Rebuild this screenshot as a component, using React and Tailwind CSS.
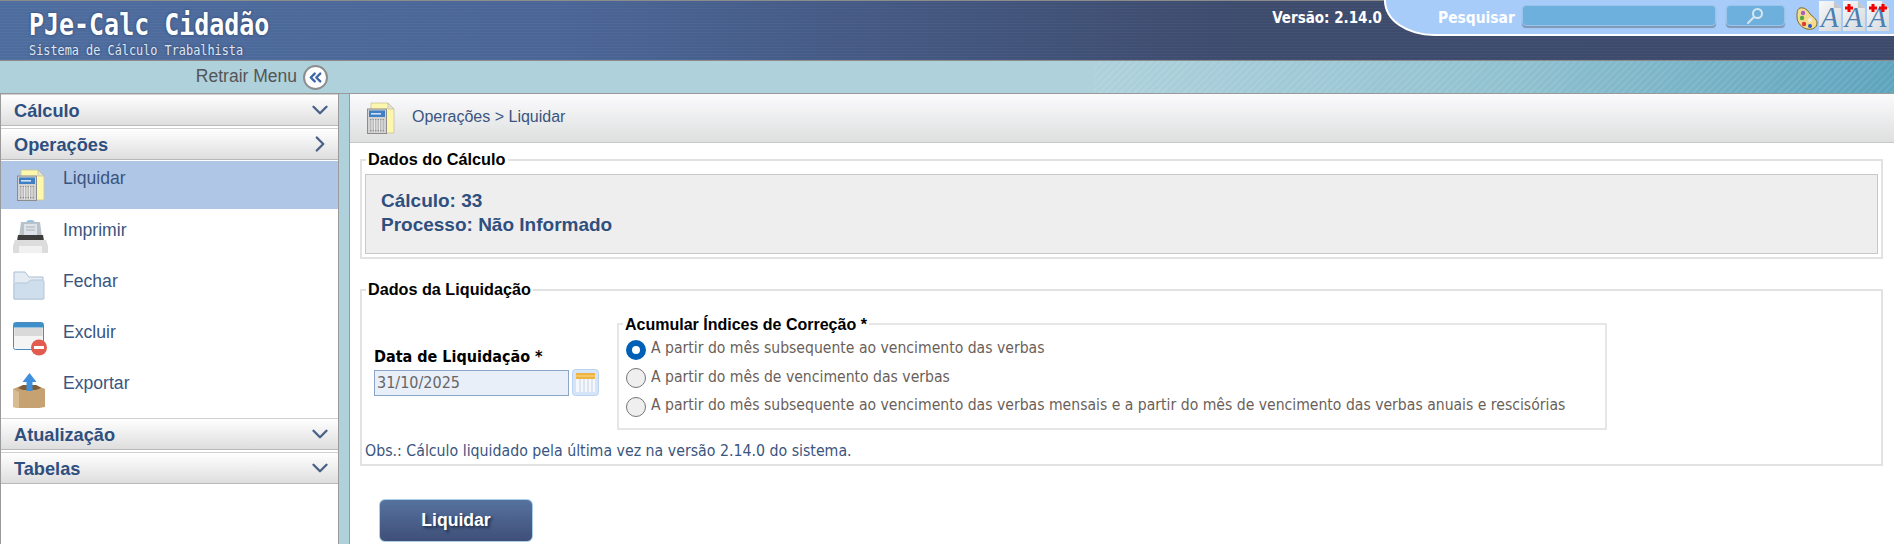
import { ChevronDown, ChevronRight, ChevronsLeft } from "lucide-react";

const CalcIcon = ({ className }) => (
    <svg className={className} viewBox="0 0 28 32">
        <path d="M4 1h17l6 6v24H4z" fill="#fdf7ae" stroke="#c9c49a" strokeWidth="0.8" />
        <path d="M21 1l6 6h-6z" fill="#e9e6d0" stroke="#b5b19a" strokeWidth="0.6" />
        <rect x="0.500" y="7" width="19" height="24.500" fill="#d2d2d2" stroke="#8c8c8c" />
        <rect x="2" y="8.500" width="16" height="6.500" fill="#3f7fc4" />
        <rect x="4" y="11" width="10" height="1.600" fill="#cfe3f7" />
        <rect x="3" y="17" width="14" height="12.500" fill="#8f8f8f" />
        <path d="M3 19h14M3 21h14M3 23h14M3 25h14M3 27h14M5 17v13M7.500 17v13M10 17v13M12.500 17v13M15 17v13" stroke="#eee" strokeWidth="0.900" />
    </svg>
);

const PrinterIcon = () => (
    <svg className="w-[35px] h-[33px]" viewBox="0 0 35 33">
        <ellipse cx="17.500" cy="2" rx="4" ry="2" fill="#8ec2e6" />
        <path d="M8 2h19l2 15H6z" fill="#b9c2c9" />
        <rect x="11" y="4" width="13" height="11" fill="#dde3e8" />
        <path d="M13 7h9M13 10h9" stroke="#a9b2ba" />
        <path d="M5 15h25l1 6H4z" fill="#3d3d3d" />
        <path d="M2 20h31l2 6v7H0v-7z" fill="#dcdcdc" />
        <rect x="6" y="26" width="23" height="7" fill="#f1f1f1" />
    </svg>
);

const FolderIcon = () => (
    <svg className="w-[32px] h-[29px]" viewBox="0 0 32 29">
        <path d="M1 28V1h11l4 5h14v22z" fill="#e4ebf3" stroke="#a9bdd2" />
        <path d="M1 28V14c0-1 1-2 2-2h11l4-3h11c1 0 2 1 2 2v17z" fill="#cfdeec" stroke="#b4c6d8" />
    </svg>
);

const RemoveIcon = () => (
    <svg className="w-[35px] h-[34px]" viewBox="0 0 35 34">
        <rect x="0.500" y="0.500" width="30" height="27" rx="2" fill="#f4f4f4" stroke="#4b8cc0" />
        <rect x="1" y="1" width="29" height="4.500" fill="#3f8fc9" />
        <rect x="1.500" y="6" width="28" height="8" fill="#d9d9d9" />
        <circle cx="26" cy="25.500" r="8" fill="#e25b4e" />
        <rect x="21" y="24" width="10" height="3" fill="#fff" />
    </svg>
);

const ExportIcon = () => (
    <svg className="w-[33px] h-[35px]" viewBox="0 0 33 35">
        <path d="M0 16l10-4h13l9 4v18l-6 1H6l-6-1z" fill="#c6a273" />
        <path d="M5 15l5-3h13l5 3-5 2H10z" fill="#7d5d37" />
        <path d="M16.500 0l7 9h-4v9h-6V9h-4z" fill="#3f8fdc" />
        <path d="M0 16l6 3v16l-6-1z" fill="#d8bb91" />
    </svg>
);

const CalendarIcon = () => (
    <svg className="w-[27px] h-[27px]" viewBox="0 0 27 27">
        <rect x="0.500" y="0.500" width="26" height="26" rx="3" fill="#d5e4f7" stroke="#bcd3ef" />
        <rect x="4" y="4" width="19" height="6" fill="#eeb33f" />
        <rect x="4" y="6.500" width="19" height="1" fill="#f8d990" />
        <rect x="4" y="10" width="19" height="13" fill="#f4f7fb" />
        <path d="M8 10v13M12 10v13M16 10v13M20 10v13" stroke="#c4d3e6" />
    </svg>
);

const SearchIcon = () => (
    <svg className="w-[18px] h-[18px]" viewBox="0 0 18 18" fill="none" stroke="#d8e6f2" strokeWidth="2">
        <circle cx="11.500" cy="6.500" r="4.500" />
        <path d="M8 10l-6 6" strokeLinecap="round" />
    </svg>
);

const PaletteIcon = () => (
    <svg className="w-[22px] h-[23px]" viewBox="0 0 22 23">
        <path d="M4 1c4-1 8 2 10 6 2 2 7 5 7 9 0 5-5 7-10 6C6 21 1 16 1 10 1 6 1 2 4 1z" fill="#f3dc8e" stroke="#7b6a2a" />
        <circle cx="7" cy="6" r="2.200" fill="#a65fc9" />
        <circle cx="6" cy="11" r="2.200" fill="#4faa3c" />
        <circle cx="8" cy="17" r="2.200" fill="#e03b2e" />
        <circle cx="14" cy="13" r="2" fill="#eee" />
        <circle cx="14" cy="19" r="2" fill="#2a55c8" />
    </svg>
);

// page icon with the A, plus = how many red crosses sit on top
const FontDocIcon = ({ plus = 0 }) => (
    <div className="relative w-[22px] h-[30px] bg-[linear-gradient(135deg,#f8f8f8,#d5d8dc)] flex items-center justify-center shrink-0">
        <svg className="absolute top-0 right-0 w-[7px] h-[7px]" viewBox="0 0 7 7">
            <path d="M0 0h7v7z" fill="#a8ccfa" />
            <path d="M0 0v7h7z" fill="#c4c6ca" />
        </svg>
        <span className="font-['Liberation_Serif',serif] italic text-[#4a7fb5] text-[29px] leading-none pt-[3px]">A</span>
        {plus > 0 && (
            <svg className="absolute top-[3px] left-[2px] w-[20px] h-[8px]" viewBox="0 0 20 8" fill="#f00000">
                <path d="M2.500 0h3v2.500H8v3H5.500V8h-3V5.500H0v-3h2.500z" />
                {plus > 1 && <path d="M12.500 0h3v2.500H18v3h-2.500V8h-3V5.500H10v-3h2.500z" />}
            </svg>
        )}
    </div>
);

const SectionHeader = ({ title, open, gap = "mb-[2px]" }) => (
    <div className={`h-[32px] ${gap} flex items-center justify-between pl-[13px] pr-[5px] border-y border-[#b9b9b9] border-t-[#d0d0d0] bg-[linear-gradient(#ffffff,#dedede)]`}>
        <span className="text-[18.200px] font-bold text-[#2f4f7f] pt-[4px]">{title}</span>
        {open
            ? <ChevronRight size={26} strokeWidth={2.200} className="text-[#4a6288]" />
            : <ChevronDown size={26} strokeWidth={2.200} className="text-[#4a6288]" />}
    </div>
);

const MenuItem = ({ label, icon, active }) => (
    <div className={active ? "h-[48px] flex bg-[#b0c6e6] pt-[5px]" : "h-[51px] flex pt-[9px]"}>
        <div className={`w-[62px] pl-[12px] shrink-0 ${active ? "pt-[3px]" : "pt-[2px]"}`}>{icon}</div>
        <span className="text-[17.600px] text-[#3a5580] leading-[24px]">{label}</span>
    </div>
);

const Radio = ({ checked, label }) => (
    <div className="flex items-center h-[28.300px]">
        {checked ? (
            <span className="w-[20px] h-[20px] rounded-full border-[6px] border-[#0060b8] bg-white shrink-0" />
        ) : (
            <span className="w-[20px] h-[20px] rounded-full border border-[#767676] bg-[#efefef] shrink-0" />
        )}
        <span className="ml-[5px] -mt-[2px] text-[#6b5f5a] whitespace-nowrap">{label}</span>
    </div>
);

export default function App() {
    return (
        <div className="w-[1894px] h-[544px] overflow-hidden bg-white font-['Liberation_Sans',Arial,sans-serif]">
            {/* Header */}
            <div className="h-[61px] flex border-t border-b border-[#8c8c8c] bg-[repeating-linear-gradient(0deg,rgba(255,255,255,0.03)_0_1px,transparent_1px_3px),linear-gradient(90deg,#4e6d9f_0%,#4a6596_30%,#3d4b6d_65%,#3d4a6b_100%)]">
                <div className="pl-[29px] pt-[5px] text-white [text-shadow:0_0_3px_#2a3f66]">
                    <div className="font-['DejaVu_Sans_Mono',monospace] font-bold text-[31px] leading-[36px] origin-left scale-x-[0.805] whitespace-nowrap">PJe-Calc Cidadão</div>
                    <div className="font-['DejaVu_Sans_Mono',monospace] text-[13.700px] leading-[16px] origin-left scale-x-[0.866] text-[#dfe7f2] whitespace-nowrap">Sistema de Cálculo Trabalhista</div>
                </div>
                <div className="flex-1" />
                <div className="pt-[8px] pr-[2px] font-['DejaVu_Sans_Condensed','DejaVu_Sans',sans-serif] font-bold text-[15px] leading-[18px] text-white whitespace-nowrap">Versão: 2.14.0</div>
                <div className="w-[510px] h-[36px] -mt-px rounded-bl-[50px_35px] border-b-2 border-l-2 border-white bg-[#a8ccfa] flex items-start pl-[52px] pt-[5px]">
                    <span className="font-['DejaVu_Sans_Condensed','DejaVu_Sans',sans-serif] font-bold text-[15.400px] leading-[26px] text-white">Pesquisar</span>
                    <div className="ml-[7px] w-[194px] h-[21px] rounded-[4px] bg-[#6db0dd] border border-[#9cc5ea] shadow-[0_2px_1px_#7f96b5]" />
                    <div className="ml-[10px] w-[59px] h-[21px] rounded-[4px] bg-[#6db0dd] border border-[#9cc5ea] shadow-[0_2px_1px_#7f96b5] flex items-center justify-center">
                        <SearchIcon />
                    </div>
                    <div className="ml-[11px] flex items-start">
                        <div className="pt-[2px]"><PaletteIcon /></div>
                        <div className="ml-[1px] -mt-[4px] flex gap-[2px]">
                            <FontDocIcon />
                            <FontDocIcon plus={1} />
                            <FontDocIcon plus={2} />
                        </div>
                    </div>
                </div>
            </div>

            {/* Retrair Menu strip */}
            <div className="h-[33px] flex items-center bg-[#aed1dc] border-b border-[#9a9a9a]">
                <div className="w-[303px] text-right pr-[6px] text-[17.500px] text-[#555] -mt-[2px]">Retrair Menu</div>
                <div className="w-[25px] h-[25px] rounded-full bg-white border-2 border-[#8d8d8d] flex items-center justify-center text-[#3f66a8]">
                    <ChevronsLeft size={19} strokeWidth={3} />
                </div>
                <div className="ml-auto w-[800px] h-full bg-[repeating-linear-gradient(135deg,rgba(255,255,255,0.08)_0_2px,transparent_2px_5px),linear-gradient(90deg,#aed1dc_0%,#92c2d0_50%,#5ea4bd_100%)]" />
            </div>

            {/* Body */}
            <div className="flex h-[450px] bg-[#aed1dc]">
                {/* Sidebar */}
                <div className="w-[339px] shrink-0 bg-white border-x border-[#9a9a9a]">
                    <SectionHeader title="Cálculo" />
                    <SectionHeader title="Operações" open gap="mb-[1px]" />
                    <MenuItem label="Liquidar" active icon={<CalcIcon className="w-[28px] h-[32px] ml-[4px]" />} />
                    <MenuItem label="Imprimir" icon={<PrinterIcon />} />
                    <MenuItem label="Fechar" icon={<FolderIcon />} />
                    <MenuItem label="Excluir" icon={<RemoveIcon />} />
                    <MenuItem label="Exportar" icon={<ExportIcon />} />
                    <div className="h-[5px]" />
                    <SectionHeader title="Atualização" />
                    <SectionHeader title="Tabelas" />
                </div>

                {/* Main */}
                <div className="ml-[10px] flex-1 bg-white border-l border-[#9a9a9a]">
                    <div className="h-[49px] flex items-center bg-[linear-gradient(#fbfbfd,#dedfdf)] border-b border-[#c8c8c8]">
                        <CalcIcon className="w-[28px] h-[32px] ml-[17px]" />
                        <span className="ml-[17px] -mt-[2px] text-[16px] text-[#3a5580]">Operações &gt; Liquidar</span>
                    </div>

                    <div className="relative mt-[16px] ml-[10px] mr-[11px] h-[100px] border-2 border-[#e2e2e2] px-[3px] pt-[13px]">
                        <span className="absolute -top-[11px] left-[4px] bg-white px-[2px] text-[16.300px] leading-[18px] font-bold text-black">Dados do Cálculo</span>
                        <div className="h-[80px] bg-[#eeeeee] border border-[#c8c8c8] pl-[15px] pt-[14px] text-[19px] leading-[24px] font-bold text-[#2f4f7f]">
                            <div>Cálculo: 33</div>
                            <div>Processo: Não Informado</div>
                        </div>
                    </div>

                    <div className="relative mt-[30px] ml-[10px] mr-[11px] h-[177px] border-2 border-[#e2e2e2]">
                        <span className="absolute -top-[11px] left-[4px] bg-white px-[2px] text-[16.200px] leading-[18px] font-bold text-black">Dados da Liquidação</span>
                        <div className="flex pt-[32px]">
                            <div className="w-[255px] pl-[12px] pt-[24px] shrink-0">
                                <div className="font-['DejaVu_Sans_Condensed','DejaVu_Sans',sans-serif] font-bold text-[16px] leading-[20px] text-black">Data de Liquidação *</div>
                                <div className="flex mt-[3px]">
                                    <div className="w-[195px] h-[26px] bg-[#e8eff8] border border-[#8aa5c8] pl-[2px] text-[16px] leading-[24px] text-[#666] font-['DejaVu_Sans_Condensed','DejaVu_Sans',sans-serif]">31/10/2025</div>
                                    <div className="ml-[3px] -mt-[1px]"><CalendarIcon /></div>
                                </div>
                            </div>
                            <div className="relative w-[990px] h-[107px] border-2 border-[#e6e6e6] pl-[7px] pt-[11px] text-[15.600px] font-['DejaVu_Sans_Condensed','DejaVu_Sans',sans-serif]">
                                <span className="absolute -top-[9px] left-[4px] bg-white px-[2px] font-['Liberation_Sans',sans-serif] text-[16px] leading-[18px] font-bold text-black">Acumular Índices de Correção *</span>
                                <Radio checked label="A partir do mês subsequente ao vencimento das verbas" />
                                <Radio label="A partir do mês de vencimento das verbas" />
                                <Radio label="A partir do mês subsequente ao vencimento das verbas mensais e a partir do mês de vencimento das verbas anuais e rescisórias" />
                            </div>
                        </div>
                        <div className="pl-[3px] pt-[9px] text-[15.750px] text-[#3a5580] font-['DejaVu_Sans_Condensed','DejaVu_Sans',sans-serif]">Obs.: Cálculo liquidado pela última vez na versão 2.14.0 do sistema.</div>
                    </div>

                    <button className="mt-[33px] ml-[29px] w-[154px] h-[43px] rounded-[6px] border border-[#a9d0e6] bg-[linear-gradient(#56729f,#3f4f78)] text-white text-[17.600px] font-bold [text-shadow:2px_2px_3px_#1f2a44]">Liquidar</button>
                </div>
            </div>
        </div>
    );
}
